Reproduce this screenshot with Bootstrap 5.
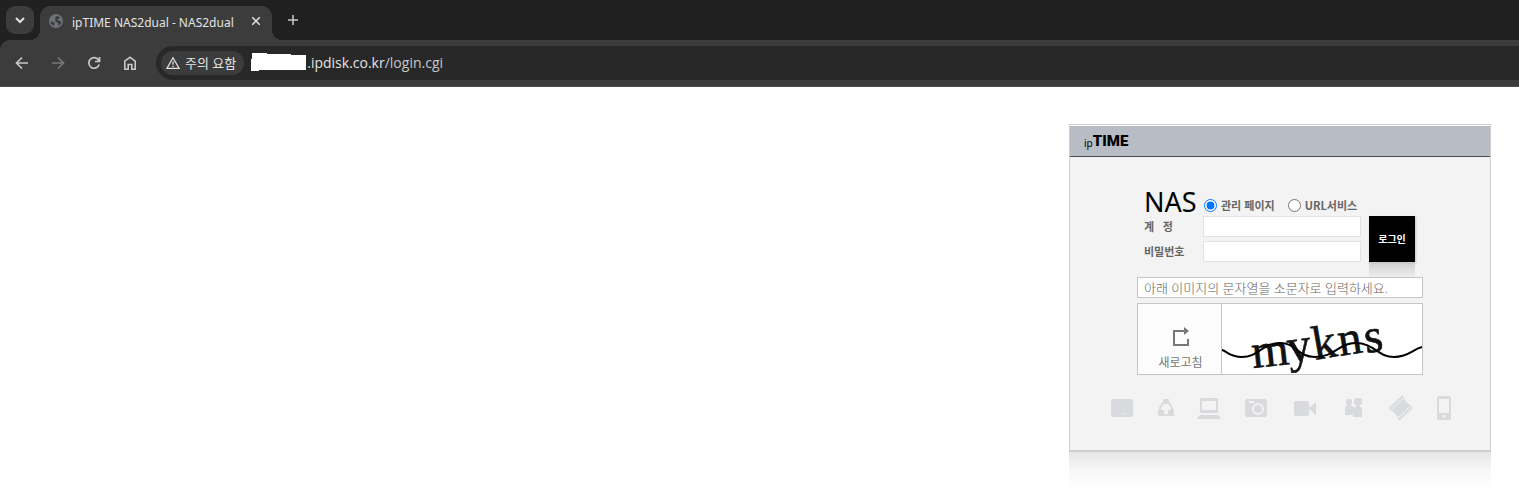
<!DOCTYPE html>
<html lang="ko">
<head>
<meta charset="utf-8">
<meta name="viewport" content="width=device-width, initial-scale=1">
<title>ipTIME NAS2dual - NAS2dual</title>
<link href="https://cdn.jsdelivr.net/npm/bootstrap@5.3.0/dist/css/bootstrap.min.css" rel="stylesheet">
<style>
body { font-family: "Noto Sans", "Noto Sans CJK KR", sans-serif; background: #fff; overflow-x: hidden; }
svg { display: block; flex: none; }
.chrome-btn { border: 0; padding: 0; background: none; color: #c7c7c7; }
.tab-strip { height: 40px; background: #202020; padding-left: 6px; }
.tab-search { width: 28px; height: 28px; margin-top: 6px; border-radius: 9px; background: #3c3c3c; color: #e3e3e3; }
.browser-tab { position: relative; width: 232px; height: 34px; margin: 6px 0 0 6px; padding: 0 8px; border-radius: 10px 10px 0 0; background: #3c3c3c; color: #e3e3e3; font-size: 12px; }
.browser-tab::before, .browser-tab::after { content: ""; position: absolute; bottom: 0; width: 10px; height: 10px; }
.browser-tab::before { left: -10px; background: radial-gradient(circle at 0 0, transparent 10px, #3c3c3c 10px); }
.browser-tab::after { right: -10px; background: radial-gradient(circle at 100% 0, transparent 10px, #3c3c3c 10px); }
.tab-title { margin-left: 8px; line-height: 16px; }
.tool-wrap { background: #202020; }
.toolbar { height: 47px; padding-left: 14px; border-radius: 10px 0 0 0; background: #3c3c3c; border-bottom: 1px solid #4a4a4a; }
.tool-nav { gap: 20px; margin-right: 18px; }
.address { height: 34px; padding-left: 5px; border-radius: 17px 0 0 17px; background: #282828; color: #e3e3e3; font-size: 14px; }
.url { font-family: "Open Sans", sans-serif; line-height: 20px; }
.warn-chip { height: 24px; padding: 0 8px 0 5px; gap: 5px; border-radius: 12px; background: #3c3c3c; color: #e3e3e3; font-size: 13px; line-height: 24px; }
.url-mask { margin-left: 6px; }
.url-path { color: #c7c7c7; }
.login-page { padding: 37px 28px 0 16px; }
.login-wrap { width: 422px; max-width: 100%; }
.login-panel { border: 1px solid #cfcfd1; border-bottom: 2px solid #cdcdcd; background: #f3f3f3; }
.panel-head { height: 32px; padding-left: 14px; border-top: 1px solid #fff; border-bottom: 1px solid #4a4c50; background: #b8bdc5; color: #000; }
.brand-ip { font-size: 10px; line-height: 12px; padding-top: 4px; }
.brand-time { font-family: Roboto, sans-serif; font-weight: 900; font-size: 15px; line-height: 16px; }
.panel-shade { height: 38px; background: linear-gradient(#e6e6e6, #f6f6f6 45%, #fff); }
.login-form { width: 286px; margin: 0 auto; padding-top: 29px; color: #666; font-size: 11px; font-weight: 700; line-height: 16px; }
.form-top { height: 30px; padding-left: 7px; }
.form-title { width: 59px; color: #000; font-size: 27px; line-height: 32px; font-weight: 400; }
.choices { gap: 12px; padding-top: 8px; }
.choice input { width: 13px; height: 13px; margin: 0 4px 0 1px; }
.choice label { font-family: "Noto Sans CJK KR", sans-serif; line-height: 16px; }
.fields { display: grid; grid-template-columns: 59px 158px 54px; row-gap: 4px; padding-left: 7px; }
.fields input { height: 21px; border: 1px solid #e3e3e3; background: #fff; padding: 0 4px; min-width: 0; }
.login-btn { grid-column: 3; grid-row: 1 / 3; margin-left: 8px; border: 0; padding: 0; background: #000; color: #fff; font-size: 10px; font-weight: 700; box-shadow: 1px 1px 2px #c4c4cc; }
.btn-shade { width: 46px; height: 15px; margin-left: 232px; background: linear-gradient(#d0d0d0, #ededed); }
.captcha-input { height: 21px; border: 1px solid #c5c5c5; border-radius: 0; padding: 0 6px; background: #fff; font-size: 13px; font-weight: 300; color: #666; }
.captcha-input::placeholder { color: #666; opacity: 1; }
.captcha { height: 72px; margin-top: 5px; border: 1px solid #c5c5c5; background: #fff; }
.refresh { width: 84px; border: 0; border-right: 1px solid #c5c5c5; padding: 20px 0 0 2px; background: #fcfcfc; color: #777; font-size: 12px; font-weight: 400; line-height: 16px; gap: 8px; }
.device-row { padding: 20px 37px 29px 40px; color: #d8dade; }
</style>
</head>
<body>
<header>
  <div class="tab-strip d-flex">
    <button class="tab-search chrome-btn d-flex align-items-center justify-content-center" aria-label="탭 검색"><svg width="12" height="12" fill="none" stroke="currentColor" stroke-width="2"><path d="M2 4l4 4 4-4"/></svg></button>
    <div class="browser-tab d-flex align-items-center">
      <svg class="mb-1" width="16" height="16" viewBox="0 0 16 16"><circle cx="8" cy="8" r="7" fill="#6d7278"/><path d="M8 3.300c1.200-.4 3 .2 4 1.200-.2 1.200-1 1.400-2.200 1.300-.8.500-.4 1.300.6 1.500.9.300 1.200 1.200 3 1.200-.2 2-1.400 3.500-3.200 4.200-.4-1.200.4-1.700 0-2.700-1-.8-2.600-.9-3-2 .3-1.600-.5-2.600.8-4.700z" fill="#3c3c3c"/><path d="M2.500 8.500c2 0 3.500.7 4.200 1.700l-.7 2.600C4 12 2.800 10.500 2.500 8.500z" fill="#3c3c3c"/></svg>
      <span class="tab-title text-nowrap">ipTIME NAS2dual - NAS2dual</span>
      <button class="chrome-btn ms-auto me-1 mb-1" aria-label="탭 닫기"><svg width="8" height="8" stroke="#e3e3e3" stroke-width="1.500"><path d="M0 0l8 8M8 0L0 8"/></svg></button>
    </div>
    <button class="chrome-btn ms-3" aria-label="새 탭"><svg width="10" height="10" stroke="currentColor" stroke-width="1.500"><path d="M5 0v10M0 5h10"/></svg></button>
  </div>
  <div class="tool-wrap">
    <div class="toolbar d-flex align-items-center">
      <nav class="tool-nav d-flex">
        <button class="chrome-btn" aria-label="뒤로"><svg width="16" height="16" fill="none" stroke="currentColor" stroke-width="1.700"><path d="M14 8H3M8 2.500L2.500 8 8 13.500"/></svg></button>
        <button class="chrome-btn" aria-label="앞으로"><svg width="16" height="16" fill="none" stroke="#777" stroke-width="1.700"><path d="M2 8h11M8 2.500L13.500 8 8 13.500"/></svg></button>
        <button class="chrome-btn" aria-label="새로고침"><svg width="16" height="16" fill="none" stroke="currentColor" stroke-width="1.700"><path d="M12.700 5.200A5.300 5.300 0 1 0 13.200 9.500M13.500 2v4.500H9"/></svg></button>
        <button class="chrome-btn" aria-label="홈"><svg width="16" height="16" fill="none" stroke="currentColor" stroke-width="1.600"><path d="M2.800 6.200L8 2.300l5.200 3.900v8H9.800V9.500H6.200v4.700H2.800z"/></svg></button>
      </nav>
      <div class="address d-flex align-items-center flex-grow-1">
        <button class="warn-chip chrome-btn d-flex align-items-center text-nowrap"><svg width="14" height="14" fill="none" stroke="currentColor" stroke-width="1.300"><path d="M7 1.800L13 12.300H1z"/><path d="M7 5.500v3.300M7 9.700v1.400"/></svg>주의 요함</button>
        <svg class="url-mask" width="57" height="20"><path fill="#fff" d="M2 0h15v1h24v1h15v15H9v1H1V6h1z"/></svg>
        <span class="url text-nowrap">.ipdisk.co.kr<span class="url-path">/login.cgi</span></span>
      </div>
    </div>
  </div>
</header>
<main class="login-page">
  <div class="login-wrap ms-auto">
    <section class="login-panel">
      <div class="panel-head d-flex align-items-center"><span class="brand-ip">ip</span><span class="brand-time">TIME</span></div>
      <form class="login-form" onsubmit="return false">
        <div class="form-top d-flex">
          <h1 class="form-title m-0">NAS</h1>
          <div class="choices d-flex align-items-center">
            <div class="choice d-flex align-items-center">
              <input type="radio" name="target" id="admin" checked><label for="admin">관리 페이지</label>
            </div>
            <div class="choice d-flex align-items-center">
              <input type="radio" name="target" id="url"><label for="url">URL서비스</label>
            </div>
          </div>
        </div>
        <div class="fields align-items-center">
          <label for="user">계&nbsp;&nbsp;&nbsp;정</label><input type="text" id="user">
          <label for="pass">비밀번호</label><input type="password" id="pass">
          <button class="login-btn align-self-stretch" type="submit">로그인</button>
        </div>
        <div class="btn-shade"></div>
        <input class="captcha-input d-block w-100" type="text" aria-label="문자열" placeholder="아래 이미지의 문자열을 소문자로 입력하세요.">
        <div class="captcha d-flex">
          <button class="refresh d-flex flex-column align-items-center justify-content-center" type="button">
            <svg width="18" height="20" fill="none" stroke="#777" stroke-width="2"><path d="M9 4H2v14h14v-6M8 4h6"/><path d="M12 0l5 4-5 4z" fill="#777" stroke="none"/></svg>
            <span>새로고침</span>
          </button>
          <svg class="flex-grow-1 overflow-visible" height="70" viewBox="0 0 200 70" role="img">
            <g fill="#111" stroke="#111" stroke-width=".6" font-family="Liberation Serif, serif" font-size="48" font-weight="400">
              <text x="31 67 93 118 144" y="64 59 56 52 49" rotate="-6 -8 -10 -9 -8">mykns</text>
            </g>
            <path d="M0 46c5 1 7 7 20 7 17 0 20-14 38-14 17 0 17 14 35 14 20 0 24-14 40-14 20 0 22 14 39 14 15 0 19-8 28-10" fill="none" stroke="#000" stroke-width="2"/>
          </svg>
        </div>
      </form>
      <div class="device-row d-flex align-items-center justify-content-between">
        <svg width="24" height="26" fill="currentColor"><rect x="1" y="4" width="22" height="18" rx="2"/><path d="M12 19h8" stroke="#f3f3f3" stroke-dasharray="1 1"/></svg>
        <svg width="18" height="26" fill="currentColor"><path d="M3 16V13l3-5h6l3 5v3M7 20h4" fill="none" stroke="currentColor" stroke-width="2"/><rect x="6" y="4" width="6" height="5" rx="1"/><rect x="1" y="15" width="6" height="6" rx="1"/><rect x="11" y="15" width="6" height="6" rx="1"/></svg>
        <svg width="24" height="26" fill="currentColor"><path fill-rule="evenodd" d="M4 3h16q1 0 1 1v13q0 1-1 1H4q-1 0-1-1V4q0-1 1-1zm1 3v9h14V6z"/><path d="M3 20h18q2 1 3 4H0q1-3 3-4z"/></svg>
        <svg width="24" height="26" fill="currentColor"><rect x="1" y="4" width="22" height="18" rx="2"/><circle cx="14" cy="14" r="5" fill="none" stroke="#f3f3f3" stroke-width="2"/><rect x="5" y="6" width="5" height="2" fill="#f3f3f3"/></svg>
        <svg width="26" height="26" viewBox="-2 0 26 26" fill="currentColor"><rect x="1" y="6" width="15" height="15" rx="2"/><path d="M16 13l7-6v13l-7-6z"/></svg>
        <svg width="24" height="26" viewBox="-4 0 24 26" fill="currentColor"><rect x="2" y="4" width="6" height="6" rx="2"/><rect x="10" y="3" width="8" height="7" rx="2"/><path d="M3 9h4v3H3zM12 9h4v4h-4z"/><rect x="1" y="11" width="8" height="9" rx="1"/><rect x="9" y="12" width="9" height="10" rx="1"/></svg>
        <svg width="26" height="26" viewBox="-3 -1 28 28" fill="currentColor"><g transform="rotate(-42 13 13)"><path d="M4 8h18v10H4z"/><path d="M3 6h20M3 20h20" stroke="currentColor" stroke-width="4" stroke-dasharray="2 1"/><path d="M3 4.500h20M3 21.500h20" stroke="currentColor"/></g></svg>
        <svg width="18" height="26" fill="currentColor"><path fill-rule="evenodd" d="M4 1h10q2 0 2 2v20q0 2-2 2H4q-2 0-2-2V3q0-2 2-2zm0 3v14h10V4z"/><circle cx="9" cy="21" r="1.500" fill="#f3f3f3"/></svg>
      </div>
    </section>
    <div class="panel-shade"></div>
  </div>
</main>
<script src="https://cdn.jsdelivr.net/npm/bootstrap@5.3.0/dist/js/bootstrap.bundle.min.js"></script>
</body>
</html>
